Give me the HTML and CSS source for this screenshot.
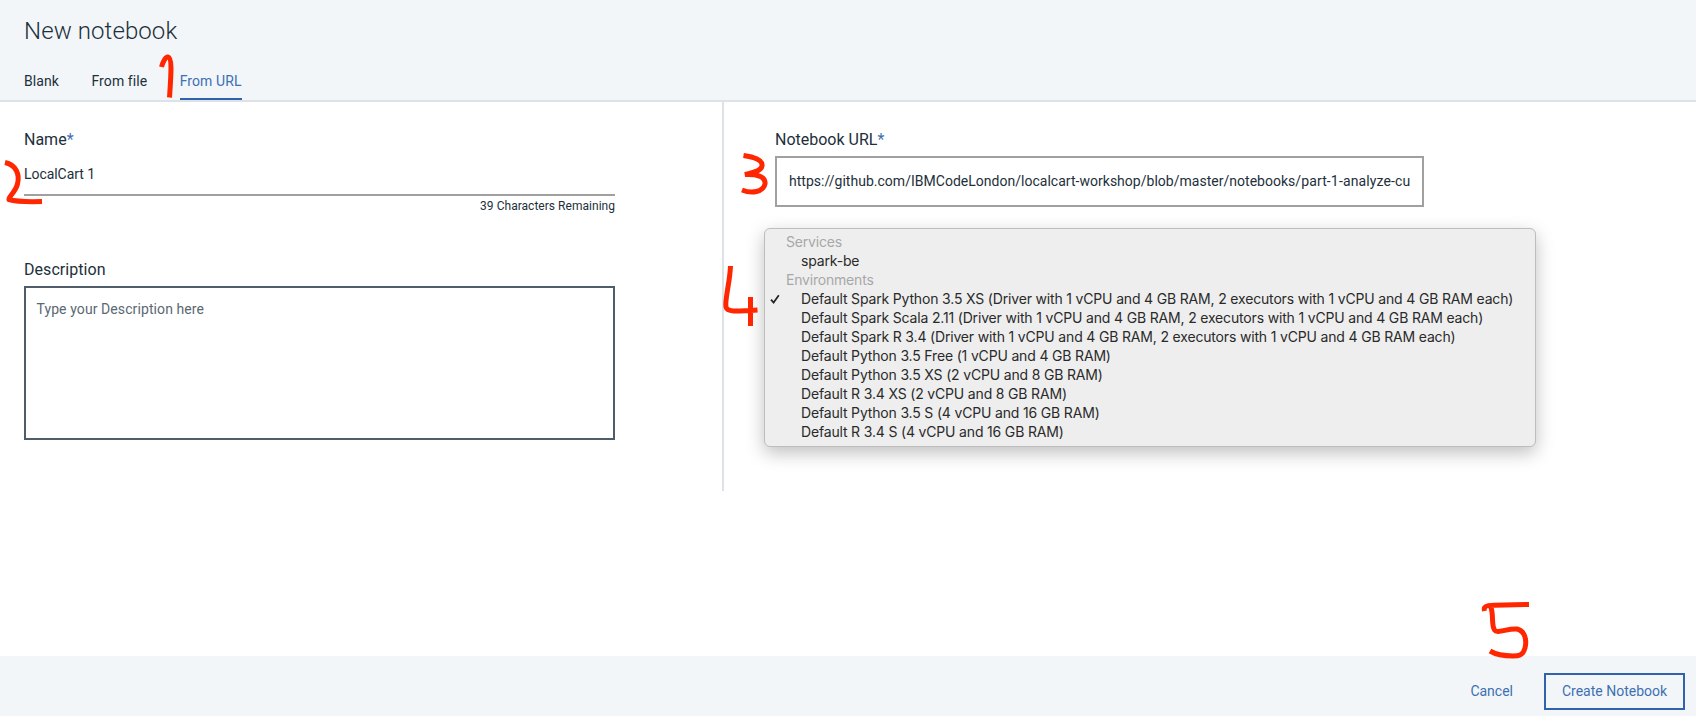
FILE: index.html
```html
<!DOCTYPE html>
<html lang="en">
<head>
<meta charset="utf-8">
<title>New notebook</title>
<link rel="stylesheet" href="styles.css">
</head>
<body>
<div class="page">
  <header class="header">
    <h1 class="title">New notebook</h1>
    <nav class="tabs">
      <a class="tab">Blank</a>
      <a class="tab">From file</a>
      <a class="tab tab-active">From URL</a>
    </nav>
  </header>
  <main class="main">
    <section class="left">
      <div class="label">Name<span class="req">*</span></div>
      <div class="name-input">LocalCart 1</div>
      <div class="counter">39 Characters Remaining</div>
      <div class="label label-desc">Description</div>
      <div class="textarea">Type your Description here</div>
    </section>
    <section class="right">
      <div class="label">Notebook URL<span class="req">*</span></div>
      <div class="url-input"><div class="url-text">https://github.com/IBMCodeLondon/localcart-workshop/blob/master/notebooks/<span class="url-file">part-1-analyze-cu</span></div></div>
      <div class="menu">
        <div class="group">Services</div>
        <div class="option">spark-be</div>
        <div class="group">Environments</div>
        <div class="option"><svg class="check" viewBox="0 0 10 10"><path d="M1 5.600 3.600 8.600 8.800 1.200"/></svg>Default Spark Python 3.5 XS (Driver with 1 vCPU and 4 GB RAM, 2 executors with 1 vCPU and 4 GB RAM each)</div>
        <div class="option">Default Spark Scala 2.11 (Driver with 1 vCPU and 4 GB RAM, 2 executors with 1 vCPU and 4 GB RAM each)</div>
        <div class="option">Default Spark R 3.4 (Driver with 1 vCPU and 4 GB RAM, 2 executors with 1 vCPU and 4 GB RAM each)</div>
        <div class="option">Default Python 3.5 Free (1 vCPU and 4 GB RAM)</div>
        <div class="option">Default Python 3.5 XS (2 vCPU and 8 GB RAM)</div>
        <div class="option">Default R 3.4 XS (2 vCPU and 8 GB RAM)</div>
        <div class="option">Default Python 3.5 S (4 vCPU and 16 GB RAM)</div>
        <div class="option">Default R 3.4 S (4 vCPU and 16 GB RAM)</div>
      </div>
    </section>
  </main>
  <footer class="footer">
    <a class="cancel">Cancel</a>
    <a class="create">Create Notebook</a>
  </footer>
  <!-- Handwritten step numbers 1 to 5 -->
  <svg class="marks" viewBox="0 0 1696 716">
    <path d="M161.500 67C163 61 166 56.500 168 57C172.500 58 171 75 169.500 97.500"/>
    <path d="M5 162.500C16 165 20 174 17.500 184C15 193 8 197 9 199.500C14 201 26 202 42 201.500"/>
    <path d="M743.500 155.500C754 157 763 160 762 166C761 172 750 173 745 174.500C756 174 766 176 765 184C763 192 752 194 742 190"/>
    <path d="M730.500 266C730 282 724.500 300 726 307C727 312 735 311.500 757.500 310M750.500 297V326"/>
    <path d="M1484.500 611C1483 604 1487 605 1529 604.500M1490.500 606C1494 614 1491 625 1494.500 630C1497 634 1508 628 1517 629C1525 631 1527 640 1525 648C1523 656 1518 656 1513 656C1503 656 1495 654 1490 651"/>
  </svg>
</div>
</body>
</html>
```
FILE: styles.css
```css
* { box-sizing: border-box; }
body { margin: 0; font-family: Roboto, "Liberation Sans", sans-serif; font-size: 14px; color: #1d303b; background: #fff; }
.page { position: relative; width: 1696px; height: 716px; display: flex; flex-direction: column; overflow: hidden; }
.header { height: 102px; background: #f2f6f9; border-bottom: 2px solid #dce2e5; padding: 15px 24px 0; display: flex; flex-direction: column; justify-content: space-between; }
.title { margin: 0; font-size: 24px; line-height: 32px; font-weight: 300; letter-spacing: .09px; }
.tabs { display: flex; gap: 32.500px; letter-spacing: .08px; }
.tab { height: 30px; line-height: 22px; }
.tab-active { color: #3d70b2; border-bottom: 2px solid #3063ab; }
.main { flex: 1; display: flex; }
.left { width: 724px; height: 389px; border-right: 2px solid #dce2e5; padding: 27px 107px 0 24px; }
.label { font-size: 16px; line-height: 22px; height: 27px; white-space: nowrap; }
.req { color: #3d70b2; }
.name-input { height: 40px; line-height: 36px; letter-spacing: -.05px; border-bottom: 2px solid #a0a0a0; }
.counter { font-size: 12px; line-height: 20px; letter-spacing: .03px; text-align: right; height: 42px; }
.label-desc { margin-top: 21px; letter-spacing: .05px; }
.textarea { height: 154px; border: 2px solid #4f5d6a; padding: 10px 10.500px; line-height: 22px; letter-spacing: .09px; color: #5a6872; }
.right { position: relative; padding: 27px 0 0 51px; }
.url-input { width: 649px; height: 51px; border: 2px solid #a0a0a0; padding: 0 12px; line-height: 47px; letter-spacing: .02px; }
.url-text { overflow: hidden; white-space: nowrap; }
.url-file { letter-spacing: .14px; }
.menu { position: absolute; left: 40px; top: 126px; width: 772px; height: 219px; padding: 3px 0; background: #eee; border: 1px solid #bdbdbd; border-radius: 6px; box-shadow: 0 6px 18px rgba(0,0,0,.25); font-family: Inter, sans-serif; font-size: 14px; line-height: 19px; letter-spacing: -.17px; color: #2a2a2a; white-space: nowrap; }
.group { padding-left: 21px; letter-spacing: -.2px; color: #a8a8a8; }
.option { position: relative; padding-left: 36px; }
.check { position: absolute; left: 5px; top: 5px; width: 10px; height: 10px; fill: none; stroke: #222; stroke-width: 1.7; }
.footer { height: 60px; background: #f2f6f9; display: flex; justify-content: flex-end; align-items: flex-start; padding: 17px 11px 0 0; color: #3d70b2; }
.cancel { line-height: 37px; margin-right: 31px; }
.create { width: 141px; height: 37px; line-height: 33px; border: 2px solid #3063ab; text-align: center; }
.marks { position: absolute; inset: 0; width: 1696px; height: 716px; fill: none; stroke: #ff2600; stroke-width: 5; }
```
